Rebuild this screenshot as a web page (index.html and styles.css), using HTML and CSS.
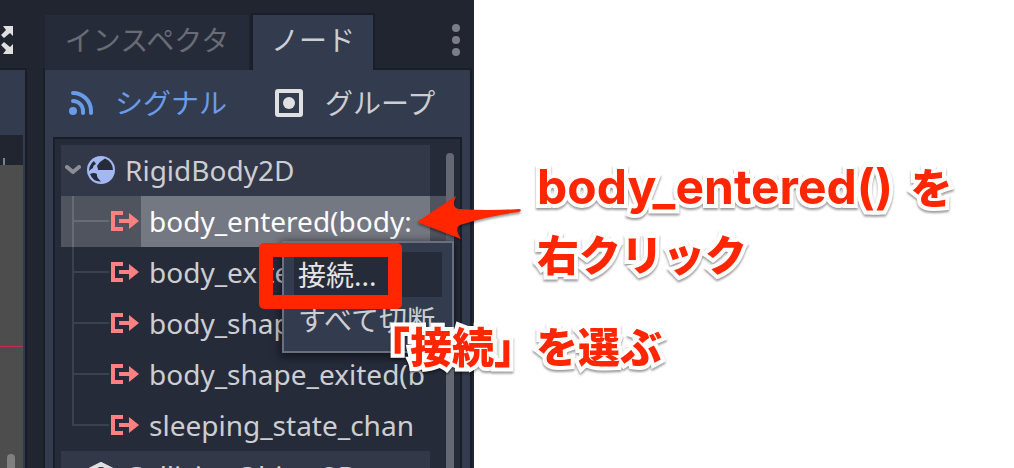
FILE: index.html
```html
<!DOCTYPE html>
<html lang="ja">
<head>
<meta charset="utf-8">
<title>ノード シグナル</title>
<link rel="stylesheet" href="styles.css">
</head>
<body>
<svg class="defs" aria-hidden="true">
  <symbol id="signal" viewBox="0 0 28 20"><path d="M0 0h12v4H4v12h8v4H0z M8 8h10V2l10 8-10 8v-6H8z"/></symbol>
</svg>
<main class="page">
  <section class="editor">
    <div class="side">
      <button class="expand" aria-label="最大化">
        <svg viewBox="0 0 14 28"><path d="M3 0h10v10L10 7l-6 5-3-3 5-5zM1 19l3-3 6 5 3-3v10H3l3-4z"/></svg>
      </button>
      <div class="viewport">
        <div class="ruler"></div>
        <div class="canvas"><div class="axis"></div><div class="vscroll"></div></div>
      </div>
    </div>
    <div class="dock">
      <nav class="tabs">
        <button class="tab">インスペクタ</button>
        <button class="tab tab-active">ノード</button>
        <button class="more" aria-label="メニュー"><i></i><i></i><i></i></button>
      </nav>
      <div class="panel">
        <div class="modes">
          <button class="mode mode-active">
            <svg class="mode-icon" viewBox="0 0 24 24"><circle cx="4" cy="20" r="4"/><path d="M4 10a10 10 0 0 1 10 10v2M4 2a18 18 0 0 1 18 18v2" fill="none" stroke="currentColor" stroke-width="4" stroke-linecap="round"/></svg>
            <span>シグナル</span>
          </button>
          <button class="mode">
            <svg class="mode-icon box" viewBox="0 0 28 28"><rect x="2" y="2" width="24" height="24" rx="1" fill="none" stroke="currentColor" stroke-width="4"/><circle cx="14" cy="14" r="6"/></svg>
            <span>グループ</span>
          </button>
        </div>
        <div class="tree">
          <ul class="rows">
            <li class="row head">
              <svg class="chevron" viewBox="0 0 16 10"><path d="M2 2l6 5 6-5"/></svg>
              <svg class="class-icon ball" viewBox="0 0 28 28"><circle cx="14" cy="14" r="14"/><path class="hole" d="M11 14q0-2-1-4Q13 5 18 2.500A12 12 0 0 1 26 14zM3 10q2-4 4-5l2 3q-3 1-3 4-2 1-4 3 0-3 1-5zM3 18q4-2 7 0-1 3 4 7.500Q6 26 3 18z"/></svg>
              <span>RigidBody2D</span>
            </li>
            <li class="row item selected"><span class="branch"></span><svg class="signal"><use href="#signal"/></svg><span class="name">body_entered(body:</span></li>
            <li class="row item"><span class="branch"></span><svg class="signal"><use href="#signal"/></svg><span class="name">body_exited(body:</span></li>
            <li class="row item"><span class="branch"></span><svg class="signal"><use href="#signal"/></svg><span class="name">body_shape_entered</span></li>
            <li class="row item"><span class="branch"></span><svg class="signal"><use href="#signal"/></svg><span class="name">body_shape_exited(b</span></li>
            <li class="row item last"><span class="branch"></span><svg class="signal"><use href="#signal"/></svg><span class="name">sleeping_state_chan</span></li>
            <li class="row head next">
              <svg class="class-icon cube" viewBox="0 0 28 28"><path d="M14 2l12 6v13l-12 6-12-6V8zM2 8l12 6 12-6M14 14v13"/></svg>
              <span>CollisionObject2D</span>
            </li>
          </ul>
          <div class="scrollbar"></div>
        </div>
      </div>
    </div>
    <div class="menu">
      <button class="menu-item hover">接続...</button>
      <button class="menu-item">すべて切断</button>
    </div>
    <div class="marker"></div>
    <svg class="arrow" viewBox="0 0 110 50"><path d="M2 28L41 2Q36 13 43 15Q72 17 104 15Q108 16 104 18Q72 22 45 31Q39 34 46 45z"/></svg>
    <p class="note note-menu">「接続」を選ぶ</p>
  </section>
  <aside class="caption">
    <p class="note"><span class="latin">body_entered()</span> を</p>
    <p class="note">右クリック</p>
  </aside>
</main>
</body>
</html>
```

FILE: styles.css
```css
* { box-sizing: border-box; }
body {
  margin: 0;
  background: #fff;
  font-family: "Noto Sans", "Noto Sans CJK JP", sans-serif;
  font-size: 28px;
  line-height: 38px;
}
button {
  border: 0;
  padding: 0;
  background: none;
  color: inherit;
  font: inherit;
  white-space: nowrap;
}
svg { fill: currentColor; flex: none; display: block; }
ul { list-style: none; margin: 0; padding: 0; }
p { margin: 0; }
.defs { position: absolute; width: 0; height: 0; }

.page { display: flex; height: 100vh; overflow: hidden; }
.editor {
  position: relative;
  display: flex;
  flex: 0 0 474px;
  gap: 16px;
  padding-right: 2px;
  background: #21252f;
  color: #cdced1;
}

.side { display: flex; flex-direction: column; width: 27px; }
.expand { height: 68px; padding-top: 12px; color: #e0e0e0; }
.expand svg { width: 14px; height: 28px; }
.viewport {
  flex: 1;
  display: flex;
  flex-direction: column;
  padding: 65px 2px 0 0;
  border: solid #1a1e29;
  border-width: 2px 2px 0 0;
  background: #333b4f;
}
.ruler { height: 30px; background: #21252f linear-gradient(#7d8089, #7d8089) 3px 100% / 2px 7px no-repeat; }
.canvas { flex: 1; display: flex; flex-direction: column; justify-content: space-between; background: #4d4d4d; }
.axis { height: 182px; border-bottom: 1px solid #c4304a; }
.vscroll { width: 8px; height: 14px; margin-left: 7px; border-radius: 4px 4px 0 0; background: #808080; }

.dock { flex: 1; display: flex; flex-direction: column; min-width: 0; }
.tabs { display: flex; height: 70px; padding: 13px 0 0 2px; margin-bottom: -2px; z-index: 1; }
.tab { width: 206px; margin-top: 2px; padding-bottom: 6px; background: #262b3a; color: #696c75; border-right: 2px solid #1e222d; }
.tab-active { width: 124px; margin: 0; border: solid #1a1e29; border-width: 2px 2px 0; background: #333b4f; color: #cdced1; }
.more { display: flex; flex-direction: column; gap: 4px; margin: 11px 12px 0 auto; }
.more i { width: 8px; height: 8px; border-radius: 4px; background: #7b7e87; }
.panel {
  flex: 1;
  display: flex;
  flex-direction: column;
  min-height: 0;
  padding: 0 8px;
  border: solid #1a1e29;
  border-width: 2px 2px 0;
  background: #333b4f;
}
.modes { display: flex; gap: 48px; height: 67px; padding: 0 0 2px 16px; flex: none; }
.mode { display: flex; align-items: center; gap: 22px; }
.mode-active { color: #699ce8; }
.mode-icon { width: 24px; height: 24px; }
.box { width: 28px; height: 28px; color: #e0e0e0; }
.tree {
  flex: 1;
  display: flex;
  min-height: 0;
  padding: 6px 6px 0;
  border: solid #1a1e29;
  border-width: 2px 2px 0;
  background: #262b3a;
}
.rows { flex: 1; min-width: 0; }
.row { display: flex; align-items: center; height: 51px; padding-bottom: 2px; margin-right: 16px; white-space: nowrap; }
.head { background: #333848; padding-left: 4px; }
.chevron { width: 16px; height: 10px; fill: none; stroke: #8b8e96; stroke-width: 4; stroke-linecap: round; stroke-linejoin: round; }
.class-icon { width: 28px; height: 28px; margin: 0 10px 0 6px; }
.ball { color: #a5b7f3; }
.hole { fill: #262b3a; }
.cube { margin-left: 26px; fill: none; stroke: #e0e0e0; stroke-width: 4; }
.next { padding-left: 0; }
.item { padding: 0 0 0 11px; }
.branch {
  align-self: stretch;
  width: 37px;
  margin-right: 2px;
  border-left: 2px solid #3c4150;
  background: linear-gradient(#3c4150, #3c4150) 0 24px / 100% 2px no-repeat;
}
.last .branch { height: 26px; align-self: flex-start; }
.signal { width: 28px; height: 20px; margin-bottom: 2px; color: #ff8080; }
.name { flex: 1; align-self: stretch; margin-left: 2px; padding-left: 8px; line-height: 50px; overflow: hidden; }
.selected { margin-right: 0; padding-right: 16px; background: #50545f; }
.selected .branch { border-color: #676b76; background-image: linear-gradient(#676b76, #676b76); }
.selected .name { background: #747882; color: #fff; }
.scrollbar { width: 8px; margin-top: 8px; border-radius: 4px 4px 0 0; background: #646872; }

.menu {
  position: absolute;
  left: 282px;
  top: 241px;
  display: flex;
  flex-direction: column;
  width: 172px;
  padding: 9px 10px;
  border: 2px solid #6a7080;
  background: #333b4f;
  box-shadow: 0 2px 8px 2px rgba(0, 0, 0, .5);
}
.menu-item { height: 45px; padding-left: 4px; text-align: left; }
.hover { background: #262b3a; color: #e4e5e7; }
.marker {
  position: absolute;
  left: 259px;
  top: 243px;
  width: 143px;
  height: 66px;
  border: 14px solid #ff2600;
  border-radius: 5px;
}
.arrow {
  position: absolute;
  left: 415px;
  top: 194px;
  width: 110px;
  height: 50px;
  fill: #ff2600;
  filter: drop-shadow(0 2px 1px rgba(0, 0, 0, .4));
}
.caption { flex: 1; padding: 153px 0 0 63px; }
.note {
  color: #ff2600;
  font-family: "Noto Sans CJK JP", sans-serif;
  font-size: 42px;
  font-weight: 900;
  line-height: 66px;
  white-space: nowrap;
  -webkit-text-stroke: 8px #fff;
  stroke-linejoin: round;
  paint-order: stroke fill;
  filter: drop-shadow(0 2px 1px rgba(0, 0, 0, .4));
}
.latin { padding-right: 8px; font-family: Inter, sans-serif; font-size: 48px; font-weight: 700; }
.note-menu { position: absolute; left: 368px; top: 312px; }
```
